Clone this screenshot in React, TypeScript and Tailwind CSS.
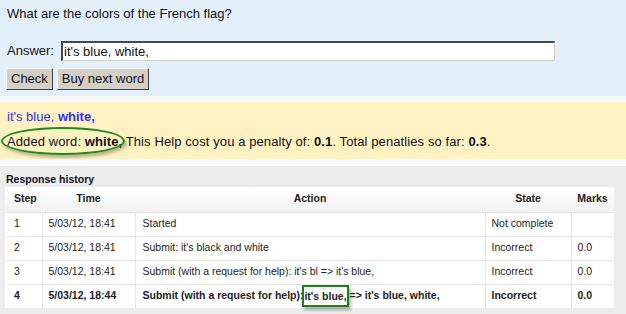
import React from 'react';

const rows = [
  { step: '1', time: '5/03/12, 18:41', action: 'Started', state: 'Not complete', marks: '' },
  { step: '2', time: '5/03/12, 18:41', action: "Submit: it's black and white", state: 'Incorrect', marks: '0.0' },
  { step: '3', time: '5/03/12, 18:41', action: "Submit (with a request for help): it's bl => it's blue,", state: 'Incorrect', marks: '0.0' },
];

export default function App() {
  return (
    <div className="w-[626px] h-[314px] overflow-hidden bg-[#fafafa] text-[#111122]" style={{ fontFamily: '"Liberation Sans", Arial, sans-serif' }}>
      {/* Question */}
      <div className="h-[96px] bg-[#e3eff9] px-[7px] pt-[6px]">
        <p className="text-[13px] leading-[16px]">What are the colors of the French flag?</p>
        <div className="flex items-center mt-[19px]">
          <span className="text-[13px] w-[54px]">Answer:</span>
          <div className="w-[494px] h-[20px] bg-white border-t-2 border-l-2 border-t-[#474747] border-l-[#474747] border-b border-r border-b-[#d4d0c8] border-r-[#d4d0c8] flex items-center px-[1px] text-[13px]">
            it's blue, white,
          </div>
        </div>
        <div className="flex gap-[4px] mt-[7px] -ml-[1px]">
          <button className="h-[22px] px-[4px] bg-[#d4d0c8] text-[13px] text-[#111122] border border-t-white border-l-white border-b-[#404040] border-r-[#404040]">Check</button>
          <button className="h-[22px] px-[4px] bg-[#d4d0c8] text-[13px] text-[#111122] border border-t-white border-l-white border-b-[#404040] border-r-[#404040]">Buy next word</button>
        </div>
      </div>
      <div className="h-[6px] bg-[#f5f8fb]" />

      {/* Help feedback */}
      <div className="relative h-[57px] bg-[#fff2c2] px-[7px] pt-[7px] text-[13px] leading-[16px]">
        <p className="text-[#3333ee]">it's blue, <b>white,</b></p>
        <p className="mt-[9px] tracking-[0.1px]">
          Added word: <b>white,</b> This Help cost you a penalty of: <b>0.1</b>. Total penatlies so far: <b>0.3</b>.
        </p>
        <div className="absolute left-[1px] top-[25px] w-[124px] h-[28px] rounded-[50%] border-2 border-[#1f8a1f] shadow-[2px_3px_3px_rgba(0,0,0,0.25)]" />
      </div>
      <div className="h-[7px] bg-[#fbfbfb]" />

      {/* Response history */}
      <div className="bg-[#ececec] h-[152px] px-[5px] pt-[6px]">
        <p className="text-[10.5px] font-bold leading-[14px] pl-[1px]">Response history</p>
        <table className="mt-[1px] w-[609px] table-fixed border-collapse bg-white text-[10.5px] text-[#222]">
          <colgroup>
            <col className="w-[37px]" />
            <col className="w-[93px]" />
            <col className="w-[350px]" />
            <col className="w-[86px]" />
            <col className="w-[43px]" />
          </colgroup>
          <thead>
            <tr className="h-[25px] bg-gradient-to-b from-white to-[#f2f2f2] font-bold">
              <th className="text-left pl-[9px] font-bold">Step</th>
              <th className="text-center font-bold">Time</th>
              <th className="text-center font-bold">Action</th>
              <th className="text-center font-bold">State</th>
              <th className="text-center font-bold">Marks</th>
            </tr>
          </thead>
          <tbody>
            {rows.map(r => (
              <tr key={r.step} className="h-[24px] border-t border-[#e6e6e6]">
                <td className="pl-[9px]">{r.step}</td>
                <td className="pl-[6px] border-l border-[#e6e6e6]">{r.time}</td>
                <td className="pl-[7px] border-l border-[#e6e6e6]">{r.action}</td>
                <td className="pl-[6px] border-l border-[#e6e6e6]">{r.state}</td>
                <td className="pl-[6px] border-l border-[#e6e6e6]">{r.marks}</td>
              </tr>
            ))}
            <tr className="h-[24px] border-t border-[#e6e6e6] font-bold">
              <td className="pl-[9px]">4</td>
              <td className="pl-[6px] border-l border-[#e6e6e6]">5/03/12, 18:44</td>
              <td className="pl-[7px] border-l border-[#e6e6e6] whitespace-nowrap">
                Submit (with a request for help):{' '}
                <span className="inline-block align-middle h-[22px] leading-[18px] border-2 border-[#1b7f1b] shadow-[2px_3px_3px_rgba(0,0,0,0.3)] -ml-[4px] -mr-[2px]">it's blue,</span>
                {' '}=&gt; it's blue, white,
              </td>
              <td className="pl-[6px] border-l border-[#e6e6e6]">Incorrect</td>
              <td className="pl-[6px] border-l border-[#e6e6e6]">0.0</td>
            </tr>
          </tbody>
        </table>
      </div>
    </div>
  );
}
